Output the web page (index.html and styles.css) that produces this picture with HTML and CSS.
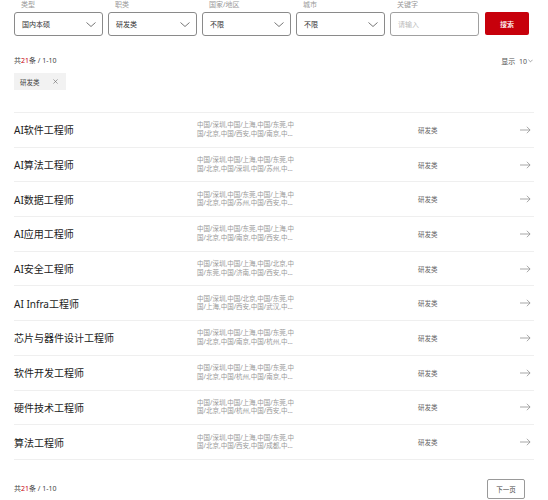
FILE: index.html
```html
<!DOCTYPE html>
<html lang="zh-CN">
<head>
<meta charset="utf-8">
<link rel="stylesheet" href="styles.css">
</head>
<body>
<div class="page">
  <div class="filters">
    <div class="field">
      <div class="label">类型</div>
      <div class="select"><span>国内本硕</span><svg class="chev" viewBox="0 0 10 5"><path d="M0.5 0.5 L5 4.5 L9.5 0.5"/></svg></div>
    </div>
    <div class="field">
      <div class="label">职类</div>
      <div class="select"><span>研发类</span><svg class="chev" viewBox="0 0 10 5"><path d="M0.5 0.5 L5 4.5 L9.5 0.5"/></svg></div>
    </div>
    <div class="field">
      <div class="label">国家/地区</div>
      <div class="select"><span>不限</span><svg class="chev" viewBox="0 0 10 5"><path d="M0.5 0.5 L5 4.5 L9.5 0.5"/></svg></div>
    </div>
    <div class="field">
      <div class="label">城市</div>
      <div class="select"><span>不限</span><svg class="chev" viewBox="0 0 10 5"><path d="M0.5 0.5 L5 4.5 L9.5 0.5"/></svg></div>
    </div>
    <div class="field">
      <div class="label">关键字</div>
      <div class="select input"><span class="ph">请输入</span></div>
    </div>
    <button class="search">搜索</button>
  </div>

  <div class="meta">
    <div class="count">共<em>21</em>条 / 1-10</div>
    <div class="show">显示&nbsp;&nbsp;10<svg class="mini" viewBox="0 0 6 4"><path d="M0.5 0.5 L3 3 L5.5 0.5"/></svg></div>
  </div>

  <div class="tags">
    <span class="tag">研发类<svg class="x" viewBox="0 0 6 6"><path d="M0.5 0.5 L5.5 5.5 M5.5 0.5 L0.5 5.5"/></svg></span>
  </div>

  <div class="list">
    <div class="row"><div class="title">AI软件工程师</div><div class="loc"><span>中国/深圳,中国/上海,中国/东莞,中</span><span>国/北京,中国/西安,中国/南京,中…</span></div><div class="cat">研发类</div><svg class="arrow" viewBox="0 0 12 8"><path d="M0 4 H11 M7.5 0.5 L11 4 L7.5 7.5"/></svg></div>
    <div class="row"><div class="title">AI算法工程师</div><div class="loc"><span>中国/深圳,中国/上海,中国/东莞,中</span><span>国/北京,中国/深圳,中国/苏州,中…</span></div><div class="cat">研发类</div><svg class="arrow" viewBox="0 0 12 8"><path d="M0 4 H11 M7.5 0.5 L11 4 L7.5 7.5"/></svg></div>
    <div class="row"><div class="title">AI数据工程师</div><div class="loc"><span>中国/深圳,中国/东莞,中国/上海,中</span><span>国/北京,中国/苏州,中国/西安,中…</span></div><div class="cat">研发类</div><svg class="arrow" viewBox="0 0 12 8"><path d="M0 4 H11 M7.5 0.5 L11 4 L7.5 7.5"/></svg></div>
    <div class="row"><div class="title">AI应用工程师</div><div class="loc"><span>中国/深圳,中国/东莞,中国/上海,中</span><span>国/北京,中国/南京,中国/西安,中…</span></div><div class="cat">研发类</div><svg class="arrow" viewBox="0 0 12 8"><path d="M0 4 H11 M7.5 0.5 L11 4 L7.5 7.5"/></svg></div>
    <div class="row"><div class="title">AI安全工程师</div><div class="loc"><span>中国/深圳,中国/上海,中国/北京,中</span><span>国/东莞,中国/济南,中国/西安,中…</span></div><div class="cat">研发类</div><svg class="arrow" viewBox="0 0 12 8"><path d="M0 4 H11 M7.5 0.5 L11 4 L7.5 7.5"/></svg></div>
    <div class="row"><div class="title">AI Infra工程师</div><div class="loc"><span>中国/深圳,中国/北京,中国/东莞,中</span><span>国/上海,中国/西安,中国/武汉,中…</span></div><div class="cat">研发类</div><svg class="arrow" viewBox="0 0 12 8"><path d="M0 4 H11 M7.5 0.5 L11 4 L7.5 7.5"/></svg></div>
    <div class="row"><div class="title">芯片与器件设计工程师</div><div class="loc"><span>中国/深圳,中国/上海,中国/东莞,中</span><span>国/北京,中国/南京,中国/杭州,中…</span></div><div class="cat">研发类</div><svg class="arrow" viewBox="0 0 12 8"><path d="M0 4 H11 M7.5 0.5 L11 4 L7.5 7.5"/></svg></div>
    <div class="row"><div class="title">软件开发工程师</div><div class="loc"><span>中国/深圳,中国/上海,中国/东莞,中</span><span>国/北京,中国/杭州,中国/南京,中…</span></div><div class="cat">研发类</div><svg class="arrow" viewBox="0 0 12 8"><path d="M0 4 H11 M7.5 0.5 L11 4 L7.5 7.5"/></svg></div>
    <div class="row"><div class="title">硬件技术工程师</div><div class="loc"><span>中国/深圳,中国/上海,中国/东莞,中</span><span>国/北京,中国/杭州,中国/西安,中…</span></div><div class="cat">研发类</div><svg class="arrow" viewBox="0 0 12 8"><path d="M0 4 H11 M7.5 0.5 L11 4 L7.5 7.5"/></svg></div>
    <div class="row"><div class="title">算法工程师</div><div class="loc"><span>中国/深圳,中国/上海,中国/东莞,中</span><span>国/北京,中国/西安,中国/成都,中…</span></div><div class="cat">研发类</div><svg class="arrow" viewBox="0 0 12 8"><path d="M0 4 H11 M7.5 0.5 L11 4 L7.5 7.5"/></svg></div>
  </div>

  <div class="footer">
    <div class="count">共<em>21</em>条 / 1-10</div>
    <button class="next">下一页</button>
  </div>
</div>
</body>
</html>
```
FILE: styles.css
```css
* { box-sizing: border-box; }
body {
  margin: 0;
  background: #fff;
  font-family: "Noto Sans", "Noto Sans CJK SC", sans-serif;
  color: #222;
}
.page {
  padding: 0 14px;
}
.filters {
  display: flex;
  align-items: flex-end;
  gap: 5px;
}
.field {
  width: 89px;
}
.label {
  font-size: 7px;
  line-height: 10px;
  color: #999;
  padding-left: 7px;
  margin-bottom: 2px;
}
.select {
  height: 24px;
  border: 1px solid #8a8a8a;
  border-radius: 3px;
  display: flex;
  align-items: center;
  justify-content: space-between;
  padding: 0 6px 0 7px;
  font-size: 7px;
  color: #333;
}
.input {
  border-color: #a0a0a0;
}
.ph {
  color: #bbb;
}
.chev {
  width: 10px;
  height: 5px;
  fill: none;
  stroke: #666;
  stroke-width: 0.9;
}
.search {
  width: 44px;
  height: 23px;
  margin-left: 1px;
  margin-bottom: 1px;
  border: none;
  border-radius: 2px;
  background: #c7000b;
  color: #fff;
  font-family: inherit;
  font-size: 7px;
  font-weight: 500;
  padding: 0;
}
.meta {
  display: flex;
  justify-content: space-between;
  align-items: center;
  margin-top: 20px;
  height: 10px;
}
.count {
  font-size: 7px;
  color: #444;
  line-height: 10px;
}
.count em {
  font-style: normal;
  color: #c7000b;
}
.show {
  font-size: 7px;
  color: #555;
  display: flex;
  align-items: center;
  padding-right: 1px;
}
.mini {
  width: 5px;
  height: 4px;
  margin-left: 1px;
  fill: none;
  stroke: #666;
  stroke-width: 0.7;
}
.tags {
  margin-top: 7px;
  display: flex;
}
.tag {
  display: inline-flex;
  align-items: center;
  height: 17px;
  width: 52px;
  padding-left: 6px;
  background: #f2f2f2;
  font-size: 6.5px;
  color: #444;
}
.x {
  width: 5px;
  height: 5px;
  margin-left: 13px;
  fill: none;
  stroke: #666;
  stroke-width: 0.7;
}
.list {
  margin-top: 22px;
  border-bottom: 1px solid #efefef;
}
.row {
  display: grid;
  grid-template-columns: 183px 221px 1fr auto;
  align-items: center;
  height: 34.7px;
  border-top: 1px solid #efefef;
  padding-right: 3px;
}
.title {
  font-size: 10px;
  color: #222;
}
.loc {
  display: flex;
  flex-direction: column;
  font-size: 6.5px;
  line-height: 8.5px;
  color: #999;
  white-space: nowrap;
}
.cat {
  font-size: 6.5px;
  color: #666;
}
.arrow {
  width: 11px;
  height: 8px;
  fill: none;
  stroke: #888;
  stroke-width: 0.8;
}
.footer {
  display: flex;
  justify-content: space-between;
  align-items: center;
  margin-top: 19px;
}
.next {
  width: 38px;
  height: 20px;
  margin-right: 9px;
  border: 1px solid #999;
  border-radius: 2px;
  background: #fff;
  font-family: inherit;
  font-size: 6.5px;
  color: #444;
  padding: 0;
}
```
